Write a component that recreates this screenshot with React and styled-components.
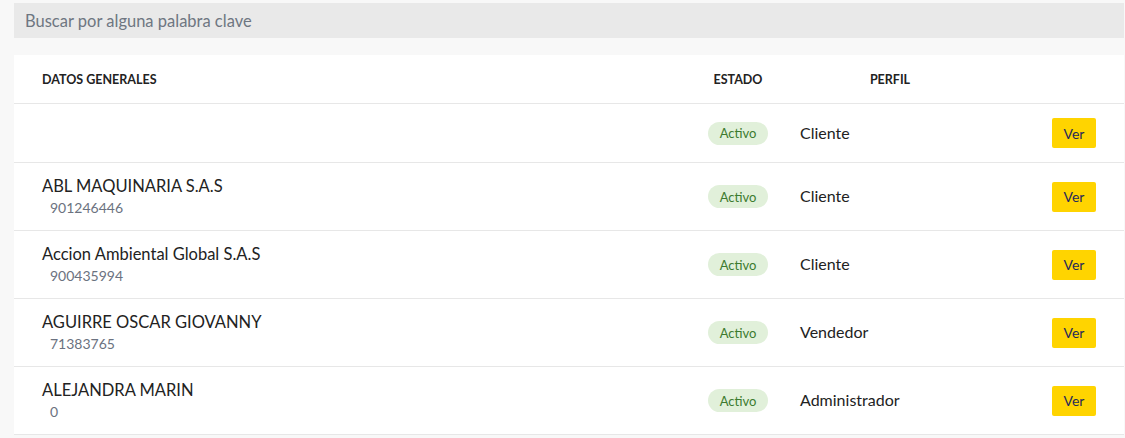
import React from "react";
import styled, { createGlobalStyle } from "styled-components";

const Global = createGlobalStyle`
  html, body { margin: 0; padding: 0; background: #f8f8f8; }
  body { font-family: Lato, "Liberation Sans", sans-serif; color: #222; }
  * { box-sizing: border-box; }
`;

const Page = styled.div`
  padding: 3px 1px 0 14px;
`;

const Search = styled.input`
  display: block;
  width: 100%;
  height: 35px;
  border: none;
  outline: none;
  background: #e9e9e9;
  padding: 0 11px;
  font-family: inherit;
  font-size: 16.5px;
  color: #333;
  &::placeholder { color: #6e7681; }
`;

const Card = styled.div`
  margin-top: 17px;
  background: #fff;
  padding: 0 28px;
`;

const Row = styled.div`
  display: grid;
  grid-template-columns: 1fr 100px 192px 116px;
  align-items: center;
  min-height: ${(p) => (p.$header ? "49px" : "59px")};
  padding: ${(p) => (p.$header ? "0 28px" : "12px 28px")};
  border-bottom: 1px solid #e7e7e7;
  margin: 0 -28px;
`;

const HeadCell = styled.div`
  font-size: 12.5px;
  font-weight: 700;
  color: #222;
  text-transform: uppercase;
  text-align: ${(p) => p.$align || "left"};
  padding-left: ${(p) => (p.$pad ? "12px" : "0")};
`;

const NameBlock = styled.div`
  display: flex;
  flex-direction: column;
`;

const Name = styled.div`
  font-size: 16.5px;
  line-height: 22px;
  color: #222;
`;

const Nit = styled.div`
  margin-top: 1px;
  padding-left: 8px;
  font-size: 14px;
  line-height: 20px;
  color: #6b7280;
`;

const StatusCell = styled.div`
  display: flex;
  justify-content: center;
`;

const Badge = styled.span`
  display: inline-flex;
  align-items: center;
  justify-content: center;
  width: 60px;
  height: 23px;
  border-radius: 12px;
  background: #e1f0da;
  color: #3d7b2f;
  font-size: 13px;
`;

const Perfil = styled.div`
  padding-left: 12px;
  font-size: 16px;
  color: #222;
  margin-top: -2px;
`;

const Action = styled.div`
  display: flex;
  justify-content: flex-end;
`;

const VerButton = styled.button`
  width: 44px;
  height: 30px;
  border: none;
  border-radius: 2px;
  background: #ffd400;
  color: #262a5b;
  font-family: inherit;
  font-size: 14px;
  padding: 0;
  cursor: pointer;
`;

const rows = [
  { name: "", nit: "", perfil: "Cliente" },
  { name: "ABL MAQUINARIA S.A.S", nit: "901246446", perfil: "Cliente" },
  { name: "Accion Ambiental Global S.A.S", nit: "900435994", perfil: "Cliente" },
  { name: "AGUIRRE OSCAR GIOVANNY", nit: "71383765", perfil: "Vendedor" },
  { name: "ALEJANDRA MARIN", nit: "0", perfil: "Administrador" },
];

export default function App() {
  return (
    <>
      <Global />
      <Page>
        <Search placeholder="Buscar por alguna palabra clave" />
        <Card>
          <Row $header>
            <HeadCell>Datos generales</HeadCell>
            <HeadCell $align="center">Estado</HeadCell>
            <HeadCell $align="center" $pad>Perfil</HeadCell>
            <HeadCell />
          </Row>
          {rows.map((r, i) => (
            <Row key={i}>
              <NameBlock>
                {r.name && <Name>{r.name}</Name>}
                {r.nit && <Nit>{r.nit}</Nit>}
              </NameBlock>
              <StatusCell>
                <Badge>Activo</Badge>
              </StatusCell>
              <Perfil>{r.perfil}</Perfil>
              <Action>
                <VerButton>Ver</VerButton>
              </Action>
            </Row>
          ))}
        </Card>
      </Page>
    </>
  );
}
